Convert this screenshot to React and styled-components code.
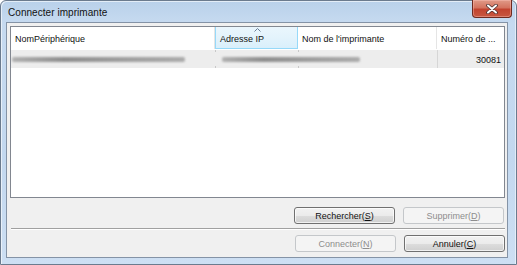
import React from 'react';
import styled, { createGlobalStyle } from 'styled-components';

const GlobalStyle = createGlobalStyle`
  html, body {
    margin: 0;
    padding: 0;
    background: #ffffff;
    overflow: hidden;
  }
  * {
    box-sizing: border-box;
  }
`;

const columns = [
  { key: 'device', label: 'NomPériphérique', width: 204 },
  { key: 'ip', label: 'Adresse IP', width: 83, sorted: true },
  { key: 'name', label: "Nom de l'imprimante", width: 139 },
  { key: 'port', label: 'Numéro de ...', width: 67 },
];

const App = () => {
  return (
    <>
      <GlobalStyle />
      <Window>
        <TitleBar>
          <Title>Connecter imprimante</Title>
          <CloseButton aria-label="Fermer">
            <svg width="14" height="10" viewBox="0 0 14 10">
              <path d="M3 1.5 L11 8.5 M11 1.5 L3 8.5" stroke="#4a3030" strokeWidth="3.6" strokeLinecap="round" fill="none" />
              <path d="M3 1.5 L11 8.5 M11 1.5 L3 8.5" stroke="#ffffff" strokeWidth="2" strokeLinecap="round" fill="none" />
            </svg>
          </CloseButton>
        </TitleBar>
        <Client>
          <ListBox>
            <HeaderRow>
              {columns.map((col) => (
                <HeaderCell key={col.key} $width={col.width} $sorted={col.sorted}>
                  {col.sorted && (
                    <SortArrow width="7" height="4" viewBox="0 0 7 4">
                      <path d="M0.5 3.5 L3.5 0.5 L6.5 3.5" stroke="#6a7f99" strokeWidth="1" fill="none" />
                    </SortArrow>
                  )}
                  {col.label}
                </HeaderCell>
              ))}
            </HeaderRow>
            <DataRow>
              <DataCell $width={204}>
                <Redacted $width={173} />
                <Tick $pos="top" />
                <Tick $pos="bottom" />
              </DataCell>
              <DataCell $width={83}>
                <Redacted $width={138} $offset={6} />
                <Tick $pos="top" />
                <Tick $pos="bottom" />
              </DataCell>
              <DataCell $width={139} />
              <DataCell $width={67} $align="right" $divider>
                30081
              </DataCell>
            </DataRow>
          </ListBox>
          <ButtonRow $right={1}>
            <Button>
              Rechercher(<u>S</u>)
            </Button>
            <Button disabled>
              Supprimer(<u>D</u>)
            </Button>
          </ButtonRow>
          <Separator />
          <ButtonRow $right={0} $top={6}>
            <Button disabled>
              Connecter(<u>N</u>)
            </Button>
            <Button>
              Annuler(<u>C</u>)
            </Button>
          </ButtonRow>
        </Client>
      </Window>
    </>
  );
};

const Window = styled.div`
  width: 517px;
  height: 265px;
  display: flex;
  flex-direction: column;
  border: 1px solid #6b7b8e;
  border-radius: 6px 6px 0 0;
  padding: 0 8px 6px 5px;
  background: linear-gradient(to bottom, #b9d1ea 0px, #c6daf0 22px, #c3d8ef 60%, #cddff3 100%);
  box-shadow: inset 1px 1px 0 rgba(255, 255, 255, 0.6), inset -1px 0 0 rgba(255, 255, 255, 0.5);
  font-family: 'Liberation Sans', Arial, sans-serif;
`;

const TitleBar = styled.div`
  height: 21px;
  display: flex;
  align-items: center;
  justify-content: space-between;
  position: relative;
`;

const Title = styled.div`
  font-size: 10px;
  color: #111111;
  padding-left: 2px;
  padding-top: 2px;
  letter-spacing: 0.05px;
`;

const CloseButton = styled.div`
  position: absolute;
  top: -1px;
  right: -4px;
  width: 40px;
  height: 18px;
  display: flex;
  align-items: center;
  justify-content: center;
  border: 1px solid #6e2a20;
  border-top: none;
  border-radius: 0 0 4px 4px;
  background: linear-gradient(to bottom, #e09a88 0%, #d4735f 45%, #c2432f 55%, #c75740 100%);
  box-shadow: inset 0 0 0 1px rgba(255, 200, 190, 0.4);
`;

const Client = styled.div`
  flex: 1;
  display: flex;
  flex-direction: column;
  border: 1px solid #8493a6;
  background: #f0f0f0;
  padding: 3px 2px 5px 3px;
`;

const ListBox = styled.div`
  height: 172px;
  border: 1px solid #828790;
  background: #ffffff;
  overflow: hidden;
`;

const HeaderRow = styled.div`
  display: flex;
  height: 22px;
  background: #ffffff;
`;

const HeaderCell = styled.div`
  position: relative;
  flex: 0 0 ${(p) => p.$width}px;
  width: ${(p) => p.$width}px;
  padding: 7px 0 0 4px;
  font-size: 9px;
  color: #111111;
  white-space: nowrap;
  overflow: hidden;
  border-right: 1px solid ${(p) => (p.$sorted ? '#96d9f9' : '#e5e5e5')};
  border-left: ${(p) => (p.$sorted ? '1px solid #96d9f9' : 'none')};
  border-bottom: ${(p) => (p.$sorted ? '1px solid #96d9f9' : 'none')};
  background: ${(p) =>
    p.$sorted ? 'linear-gradient(to bottom, #eaf6fd 0%, #e3f3fc 50%, #d9effb 100%)' : 'transparent'};

  &:last-child {
    border-right: none;
  }
`;

const SortArrow = styled.svg`
  position: absolute;
  top: 1px;
  left: 50%;
  margin-left: -3px;
`;

const DataRow = styled.div`
  display: flex;
  height: 18px;
  margin-top: 1px;
  background: #ededed;
`;

const DataCell = styled.div`
  position: relative;
  flex: 0 0 ${(p) => p.$width}px;
  width: ${(p) => p.$width}px;
  display: flex;
  align-items: center;
  justify-content: ${(p) => (p.$align === 'right' ? 'flex-end' : 'flex-start')};
  padding: 1px 3px 0 1px;
  font-size: 9px;
  color: #111111;
  border-left: ${(p) => (p.$divider ? '1px solid #d6d6d6' : 'none')};
`;

const Redacted = styled.div`
  flex: 0 0 ${(p) => p.$width}px;
  width: ${(p) => p.$width}px;
  margin-left: ${(p) => p.$offset || 0}px;
  height: 5px;
  border-radius: 2px;
  background: linear-gradient(to right, #b0b0b0, #8e8e8e 30%, #9c9c9c 60%, #ababab);
  filter: blur(1.3px);
`;

const Tick = styled.span`
  position: absolute;
  right: -1px;
  ${(p) => (p.$pos === 'top' ? 'top: 0;' : 'bottom: 0;')}
  width: 1px;
  height: 2px;
  background: #c8c8c8;
`;

const ButtonRow = styled.div`
  display: flex;
  justify-content: flex-end;
  gap: 8px;
  margin-top: ${(p) => p.$top ?? 9}px;
  padding-right: ${(p) => p.$right}px;
`;

const Button = styled.div`
  width: 101px;
  height: 17px;
  display: flex;
  align-items: center;
  justify-content: center;
  font-size: 9px;
  border-radius: 3px;
  border: 1px solid ${(p) => (p.disabled ? '#c4c7ca' : '#707070')};
  color: ${(p) => (p.disabled ? '#8d8d8d' : '#111111')};
  background: ${(p) =>
    p.disabled
      ? '#f4f4f4'
      : 'linear-gradient(to bottom, #f2f2f2 0%, #ebebeb 50%, #dddddd 51%, #cfcfcf 100%)'};
  box-shadow: ${(p) => (p.disabled ? 'none' : 'inset 0 0 0 1px rgba(255, 255, 255, 0.7)')};

  u {
    text-underline-offset: 1px;
  }
`;

const Separator = styled.div`
  margin: 4px 0 0 1px;
  height: 1px;
  background: #a0a0a0;
  box-shadow: 0 1px 0 #ffffff;
`;

export default App;
